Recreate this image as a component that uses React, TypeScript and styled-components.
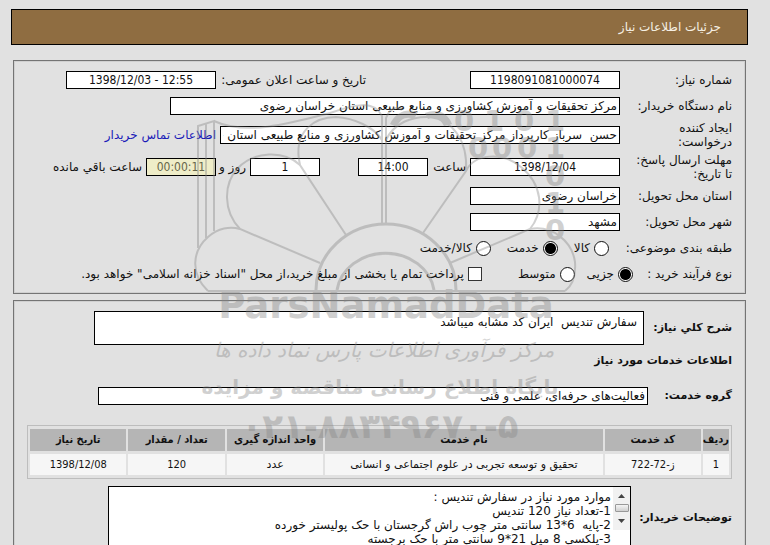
import React, { useRef } from "react";
import styled, { createGlobalStyle, css } from "styled-components";

const GlobalStyle = createGlobalStyle`
  * { box-sizing: border-box; }
  body {
    margin: 0;
    background: #e1e1e1;
    color: #111;
    font-family: "DejaVu Sans", sans-serif;
    font-size: 12px;
    line-height: 14px;
  }
`;

const Page = styled.main`
  position: relative;
  direction: rtl;
  height: 100vh;
  overflow: hidden;
  padding: 9px 22px 0 11px;
`;

const TitleBar = styled.header`
  display: flex;
  align-items: center;
  height: 36px;
  margin-bottom: 15px;
  padding: 0 26px;
  background: #8f6d41;
  border: 1px solid #000;
`;

const Title = styled.h1`
  margin: 0;
  font-size: 12px;
  font-weight: normal;
  color: #f6f0e4;
`;

const Panel = styled.section<{ $roomy?: boolean }>`
  margin: 0 2px 6px;
  padding: ${(p) => (p.$roomy ? "10px 13px" : "6px 13px")};
  border: 1px solid #747474;
  box-shadow: inset 0 0 0 1px #d0d0d0;
`;

const Row = styled.div<{ $tall?: boolean }>`
  display: flex;
  align-items: center;
  min-height: ${(p) => (p.$tall ? 32 : 26)}px;
  white-space: nowrap;
`;

const Label = styled.label<{ $width?: number }>`
  flex: none;
  width: ${(p) => (p.$width ? `${p.$width}px` : "auto")};
`;

const GroupLabel = styled.span<{ $width: number }>`
  flex: none;
  width: ${(p) => p.$width}px;
`;

const SecondGroup = styled.div`
  display: flex;
  align-items: center;
  margin-right: 104px;
`;

const boxed = css`
  margin: 0;
  border: 1px solid #000;
  border-radius: 0;
  outline: 0;
  background: #fff;
  color: #111;
  font-family: inherit;
  font-size: 12px;
`;

const Field = styled.input<{ $width: number; $numeric?: boolean; $timer?: boolean }>`
  ${boxed}
  flex: 0 1 ${(p) => p.$width}px;
  width: ${(p) => p.$width}px;
  min-width: 0;
  height: 18px;
  padding: 0 2px;
  ${(p) =>
    p.$numeric &&
    css`
      direction: ltr;
      text-align: center;
      font-family: "DejaVu Sans Condensed", "DejaVu Sans", sans-serif;
    `}
  ${(p) =>
    p.$timer &&
    css`
      background: #efedc8;
      color: #67664a;
    `}
`;

const ContactLink = styled.a`
  margin-right: 4px;
  color: #1a1ab8;
  text-decoration: none;
`;

const Between = styled.label<{ $width: number }>`
  flex: none;
  width: ${(p) => p.$width}px;
  padding-right: 4px;
`;

const DaysField = styled(Field)`
  margin-right: 38px;
`;

const Choices = styled.div<{ $gap: number }>`
  display: flex;
  align-items: center;
  gap: ${(p) => p.$gap}px;
`;

const Choice = styled.label`
  display: flex;
  align-items: center;
  gap: 4px;
`;

const Radio = styled.input`
  appearance: none;
  flex: none;
  width: 15px;
  height: 15px;
  margin: 0;
  border: 1px solid #111;
  border-radius: 50%;
  background: #fff;
  &:checked {
    background: radial-gradient(circle, #000 5px, #fff 6px);
  }
`;

const Check = styled.input`
  appearance: none;
  flex: none;
  width: 14px;
  height: 14px;
  margin: 0;
  border: 1px solid #333;
  background: #fff;
  &:checked {
    background: #333;
  }
`;

const TreasuryChoice = styled(Choice)`
  margin-right: 36px;
`;

const BoldLabel = styled.label<{ $width?: number }>`
  flex: none;
  width: ${(p) => (p.$width ? `${p.$width}px` : "auto")};
  font-size: 11px;
  font-weight: bold;
`;

const DetailRow = styled.div`
  display: flex;
  align-items: center;
  white-space: nowrap;
`;

const Summary = styled.textarea`
  ${boxed}
  flex: 0 1 550px;
  min-width: 0;
  height: 34px;
  padding: 3px 6px;
  line-height: 14px;
  resize: none;
  overflow: hidden;
`;

const SectionTitle = styled.h2`
  margin: 9px 0 19px;
  font-size: 11px;
  line-height: 14px;
`;

const ServiceTable = styled.table`
  width: 100%;
  margin: 20px 0 7px;
  table-layout: fixed;
  border: 1px solid #bdbdbd;
  border-collapse: separate;
  border-spacing: 2px 3px;
  font-size: 11px;
  text-align: center;
  th,
  td {
    padding: 0;
    white-space: nowrap;
  }
  th {
    height: 22px;
    background: #b5b5b5;
    font-family: "DejaVu Sans Condensed", "DejaVu Sans", sans-serif;
  }
  td {
    height: 21px;
    background: #f6f6f6;
  }
`;

const Amount = styled.span`
  font-family: "DejaVu Sans Condensed", "DejaVu Sans", sans-serif;
`;

const Col = styled.col<{ $width: string }>`
  width: ${(p) => p.$width};
`;

const CommentBox = styled.div`
  display: flex;
  flex: 0 1 523px;
  min-width: 0;
  height: 64px;
  border: 1px solid #000;
  background: #fff;
`;

const Comments = styled.textarea`
  flex: 1;
  min-width: 0;
  margin: 0;
  padding: 3px 2px;
  border: 0;
  outline: 0;
  resize: none;
  overflow: hidden;
  background: transparent;
  color: #111;
  font-family: inherit;
  font-size: 12px;
  line-height: 14px;
`;

const Scroller = styled.div`
  display: flex;
  flex-direction: column;
  align-items: center;
  width: 17px;
  height: 43px;
  background: #f1f1f1;
`;

const Arrow = styled.button`
  display: flex;
  align-items: center;
  justify-content: center;
  width: 17px;
  height: 17px;
  padding: 0;
  border: 0;
  background: transparent;
`;

const Thumb = styled.div`
  width: 14px;
  height: 8px;
  border: 1px solid #999;
  border-radius: 1px;
  background: linear-gradient(#f5f5f5, #d0d0d0);
`;

const Mark = styled.svg`
  position: absolute;
  left: 190px;
  top: 95px;
  width: 390px;
  height: 350px;
  opacity: 0.38;
  pointer-events: none;
`;

const services = [
  {
    row: "1",
    code: "ز-72-722",
    name: "تحقیق و توسعه تجربی در علوم اجتماعی و انسانی",
    unit: "عدد",
    amount: "120",
    date: "1398/12/08",
  },
];

const comments = [
  "موارد مورد نیاز در سفارش تندیس :",
  "1-تعداد نیاز 120 تندیس",
  "2-پایه  6*13 سانتی متر چوب راش گرجستان با حک پولیستر خورده",
  "3-پلکسی 8 میل 21*9 سانتی متر با حک برجسته",
].join("\n");

function Watermark() {
  return (
    <Mark viewBox="190 95 390 350" direction="ltr" aria-hidden="true">
      <g fill="none" stroke="#858585" strokeWidth="2">
        <path d="M198 248V126L214 121V231M206 238V124" />
        <path d="M214 121C246 136 292 123 330 113C356 104 374 100 382 116V225M386 225V118C390 108 396 106 402 110" />
        <path d="M346 235L300 165C292 130 316 117 336 117C354 118 374 127 382 140" />
        <path d="M320 263L240 229C223 211 223 184 238 168C254 151 284 150 300 165" />
        <path d="M208 291C190 274 192 251 208 237C218 228 230 226 240 229" />
        <path d="M386 140C394 123 412 116 430 117C452 120 468 140 466 171" />
        <path d="M423 233L466 171C474 154 502 151 521 167C542 184 545 210 530 229L450 263" />
        <path d="M530 229C552 225 572 241 575 262C576 276 573 285 565 291" />
        <path d="M208 291H565" />
        <path d="M316 290A70 66 0 0 1 456 290M337 290A49 43 0 0 1 434 290" strokeWidth="3" />
      </g>
      <g fill="#858585" fontFamily="DejaVu Sans" fontWeight="bold" fontSize="29" textAnchor="middle">
        <text x="464" y="131">0</text>
        <text x="494" y="131">1</text>
        <text x="524" y="131">0</text>
        <text x="555" y="131">1</text>
        <text x="478" y="158">0</text>
        <text x="502" y="158">0</text>
        <text x="527" y="158">0</text>
        <text x="555" y="158">1</text>
        <text x="555" y="186">0</text>
        <text x="555" y="213">1</text>
        <text x="555" y="240">0</text>
        <path d="M390 124C396 112 406 108 418 112L414 119C406 116 400 119 397 127Z" />
        <path d="M425 113C436 108 448 112 452 124L444 126C440 118 434 117 428 119Z" />
      </g>
      <g fill="#858585" textAnchor="middle">
        <text x="386" y="318" fontFamily="DejaVu Sans" fontWeight="bold" fontSize="37">
          ParsNamadData
        </text>
        <text x="384" y="357" direction="rtl" fontFamily="DejaVu Sans" fontStyle="italic" fontSize="20">
          مرکز فرآوری اطلاعات پارس نماد داده ها
        </text>
        <text x="380" y="394" direction="rtl" fontFamily="DejaVu Sans" fontWeight="bold" fontSize="20">
          پایگاه اطلاع رسانی مناقصه و مزایده
        </text>
        <text x="380" y="438" fontFamily="DejaVu Sans" fontWeight="bold" fontSize="34">
          ۰۲۱-۸۸۳۴۹۶۷۰-۵
        </text>
      </g>
    </Mark>
  );
}

export default function App() {
  const commentsRef = useRef<HTMLTextAreaElement>(null);
  const scroll = (dy: number) => commentsRef.current?.scrollBy(0, dy);

  return (
    <Page lang="fa">
      <GlobalStyle />
      <TitleBar>
        <Title>جزئیات اطلاعات نیاز</Title>
      </TitleBar>

      <Panel>
        <Row>
          <Label htmlFor="number" $width={112}>شماره نیاز:</Label>
          <Field id="number" $width={150} $numeric readOnly defaultValue="1198091081000074" />
          <SecondGroup>
            <Label htmlFor="announced" $width={150}>تاریخ و ساعت اعلان عمومی:</Label>
            <Field id="announced" $width={150} $numeric readOnly defaultValue="1398/12/03 - 12:55" />
          </SecondGroup>
        </Row>
        <Row>
          <Label htmlFor="buyer" $width={112}>نام دستگاه خریدار:</Label>
          <Field id="buyer" $width={450} readOnly defaultValue="مرکز تحقیقات و آموزش کشاورزی و منابع طبیعی استان خراسان رضوی" />
        </Row>
        <Row $tall>
          <Label htmlFor="creator" $width={112}>ایجاد کننده<br />درخواست:</Label>
          <Field id="creator" $width={400} readOnly defaultValue="حسن  سرباز کارپرداز مرکز تحقیقات و آموزش کشاورزی و منابع طبیعی استان خراسان رضوی" />
          <ContactLink href="#contact">اطلاعات تماس خریدار</ContactLink>
        </Row>
        <Row $tall>
          <Label htmlFor="deadline" $width={112}>مهلت ارسال پاسخ:<br />تا تاریخ:</Label>
          <Field id="deadline" $width={150} $numeric readOnly defaultValue="1398/12/04" />
          <Between htmlFor="hour" $width={42}>ساعت</Between>
          <Field id="hour" $width={70} $numeric readOnly defaultValue="14:00" />
          <DaysField id="days" $width={70} $numeric readOnly defaultValue="1" />
          <Between htmlFor="days" $width={34}>روز و</Between>
          <Field id="left" $width={70} $numeric $timer readOnly defaultValue="00:00:11" />
          <Between htmlFor="left" $width={96}>ساعت باقي مانده</Between>
        </Row>
        <Row>
          <Label htmlFor="province" $width={112}>استان محل تحویل:</Label>
          <Field id="province" $width={150} readOnly defaultValue="خراسان رضوی" />
        </Row>
        <Row>
          <Label htmlFor="city" $width={112}>شهر محل تحویل:</Label>
          <Field id="city" $width={150} readOnly defaultValue="مشهد" />
        </Row>
        <Row role="radiogroup" aria-labelledby="kind">
          <GroupLabel id="kind" $width={123}>طبقه بندی موضوعی:</GroupLabel>
          <Choices $gap={16}>
            <Choice><Radio type="radio" name="kind" />کالا</Choice>
            <Choice><Radio type="radio" name="kind" defaultChecked />خدمت</Choice>
            <Choice><Radio type="radio" name="kind" />کالا/خدمت</Choice>
          </Choices>
        </Row>
        <Row role="group" aria-labelledby="process">
          <GroupLabel id="process" $width={99}>نوع فرآیند خرید :</GroupLabel>
          <Choices $gap={12}>
            <Choice><Radio type="radio" name="process" defaultChecked />جزیی</Choice>
            <Choice><Radio type="radio" name="process" />متوسط</Choice>
          </Choices>
          <TreasuryChoice>
            <Check type="checkbox" />
            پرداخت تمام یا بخشی از مبلغ خرید،از محل "اسناد خزانه اسلامی" خواهد بود.
          </TreasuryChoice>
        </Row>
      </Panel>

      <Panel $roomy>
        <DetailRow>
          <BoldLabel htmlFor="summary" $width={88}>شرح کلي نیاز:</BoldLabel>
          <Summary id="summary" readOnly defaultValue="سفارش تندیس  ایران کد مشابه میباشد" />
        </DetailRow>
        <SectionTitle>اطلاعات خدمات مورد نیاز</SectionTitle>
        <DetailRow>
          <BoldLabel htmlFor="group" $width={84}>گروه خدمت:</BoldLabel>
          <Field id="group" $width={550} readOnly defaultValue="فعالیت‌های حرفه‌ای، علمی و فنی" />
        </DetailRow>
        <ServiceTable>
          <colgroup>
            <Col $width="26px" />
            <Col $width="14%" />
            <Col $width="auto" />
            <Col $width="14%" />
            <Col $width="14%" />
            <Col $width="14%" />
          </colgroup>
          <thead>
            <tr>
              <th>ردیف</th>
              <th>کد خدمت</th>
              <th>نام خدمت</th>
              <th>واحد اندازه گیری</th>
              <th>تعداد / مقدار</th>
              <th>تاریخ نیاز</th>
            </tr>
          </thead>
          <tbody>
            {services.map((s) => (
              <tr key={s.row}>
                <td><Amount>{s.row}</Amount></td>
                <td><Amount>{s.code}</Amount></td>
                <td>{s.name}</td>
                <td>{s.unit}</td>
                <td><Amount>{s.amount}</Amount></td>
                <td><Amount>{s.date}</Amount></td>
              </tr>
            ))}
          </tbody>
        </ServiceTable>
        <DetailRow>
          <BoldLabel htmlFor="comments" $width={101}>توضیحات خریدار:</BoldLabel>
          <CommentBox>
            <Scroller>
              <Arrow type="button" aria-label="بالا" onClick={() => scroll(-14)}>
                <svg width="7" height="4" viewBox="0 0 7 4"><path d="M0 4L3.5 0L7 4Z" fill="#444" /></svg>
              </Arrow>
              <Thumb />
              <Arrow type="button" aria-label="پایین" onClick={() => scroll(14)}>
                <svg width="7" height="4" viewBox="0 0 7 4"><path d="M0 0L3.5 4L7 0Z" fill="#444" /></svg>
              </Arrow>
            </Scroller>
            <Comments id="comments" ref={commentsRef} readOnly defaultValue={comments} />
          </CommentBox>
        </DetailRow>
      </Panel>
      <Watermark />
    </Page>
  );
}
